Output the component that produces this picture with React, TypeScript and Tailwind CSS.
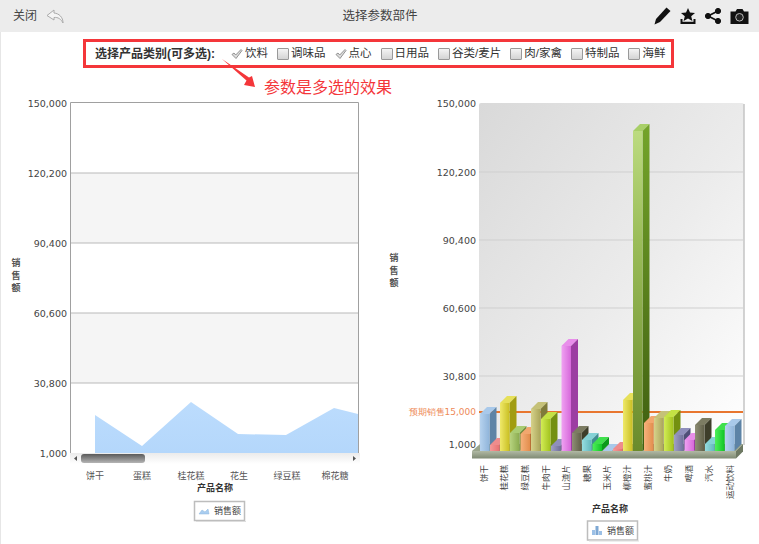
import React from 'react';

const categories = [
  { name: '饮料', checked: true },
  { name: '调味品', checked: false },
  { name: '点心', checked: true },
  { name: '日用品', checked: false },
  { name: '谷类/麦片', checked: false },
  { name: '肉/家禽', checked: false },
  { name: '特制品', checked: false },
  { name: '海鲜', checked: false },
];

const palette: Record<string, { id: string; from: string; to: string; side: string; top: string }> = {
  blue: { id: 'blue', from: '#b6d2ee', to: '#8fb4da', side: '#5d83a6', top: '#a9c9ea' },
  red: { id: 'red', from: '#f49a9a', to: '#e87070', side: '#b84f4f', top: '#ee8c8c' },
  yellow: { id: 'yellow', from: '#efe96a', to: '#c9bf22', side: '#a19c10', top: '#e6e05a' },
  green: { id: 'green', from: '#b7d37f', to: '#8aab4e', side: '#6c8a38', top: '#a9cc72' },
  orange: { id: 'orange', from: '#f6b27c', to: '#e28d4c', side: '#b96f37', top: '#f2a76e' },
  olive: { id: 'olive', from: '#d6d28a', to: '#aaa55a', side: '#7f7b3a', top: '#c5c178' },
  lime: { id: 'lime', from: '#d2ec55', to: '#a2c21e', side: '#749010', top: '#c4e244' },
  purple: { id: 'purple', from: '#a0a0c6', to: '#70709c', side: '#4f4f78', top: '#8f8fbc' },
  magenta: { id: 'magenta', from: '#f0a2f2', to: '#d668da', side: '#9c3ea2', top: '#e88eea' },
  dark: { id: 'dark', from: '#8f8f76', to: '#605f48', side: '#3e3e2a', top: '#7c7c62' },
  teal: { id: 'teal', from: '#96dde0', to: '#62b6bc', side: '#418d92', top: '#85d2d6' },
  lush: { id: 'lush', from: '#4ff05a', to: '#10c526', side: '#0a9a1a', top: '#3fe04c' },
};

const bars = [
  { x: 480, top: 414, c: 'blue' },
  { x: 490, top: 445, c: 'red' },
  { x: 500, top: 403, c: 'yellow' },
  { x: 510, top: 433, c: 'green' },
  { x: 520.5, top: 434, c: 'orange' },
  { x: 531, top: 409, c: 'olive' },
  { x: 541, top: 419, c: 'lime' },
  { x: 551, top: 446, c: 'purple' },
  { x: 561.5, top: 346, c: 'magenta' },
  { x: 572, top: 433, c: 'dark' },
  { x: 582, top: 440, c: 'teal' },
  { x: 592.5, top: 444, c: 'lush' },
  { x: 602.5, top: 451, c: 'blue' },
  { x: 613, top: 449, c: 'red' },
  { x: 623, top: 400, c: 'yellow' },
  { x: 633, top: 131, c: 'forest' },
  { x: 644, top: 423, c: 'orange' },
  { x: 654, top: 418, c: 'olive' },
  { x: 664, top: 417, c: 'lime' },
  { x: 674, top: 435, c: 'purple' },
  { x: 684.5, top: 440, c: 'magenta' },
  { x: 695, top: 425, c: 'dark' },
  { x: 705, top: 444, c: 'teal' },
  { x: 715, top: 430, c: 'lush' },
  { x: 725, top: 426, c: 'blue' },
];

const leftTicks = [
  { y: 103, label: '150,000' },
  { y: 173, label: '120,200' },
  { y: 243, label: '90,400' },
  { y: 313, label: '60,600' },
  { y: 383, label: '30,800' },
  { y: 453, label: '1,000' },
];

const rightTicks = [
  { y: 103, label: '150,000' },
  { y: 172, label: '120,200' },
  { y: 240, label: '90,400' },
  { y: 308, label: '60,600' },
  { y: 376, label: '30,800' },
  { y: 444, label: '1,000' },
];

const leftNames = [
  { x: 95, name: '饼干' },
  { x: 142, name: '蛋糕' },
  { x: 191, name: '桂花糕' },
  { x: 239, name: '花生' },
  { x: 287, name: '绿豆糕' },
  { x: 335, name: '棉花糖' },
];

const rightNames = [
  { x: 484, name: '饼干' },
  { x: 504, name: '桂花糕' },
  { x: 525, name: '绿豆糕' },
  { x: 546, name: '牛肉干' },
  { x: 566, name: '山渣片' },
  { x: 587, name: '糖果' },
  { x: 607, name: '玉米片' },
  { x: 627, name: '柳橙汁' },
  { x: 648, name: '蜜桃汁' },
  { x: 668, name: '牛奶' },
  { x: 689, name: '啤酒' },
  { x: 709, name: '汽水' },
  { x: 730, name: '运动饮料' },
];

const numberFont = "font-['DejaVu_Sans',sans-serif]";

function ToolbarIcons() {
  return (
    <div className="flex items-center gap-[9px]">
      <svg width="17" height="18" viewBox="0 0 17 18" className="fill-[#111]">
        <path d="M12.5 0.5 L16.5 4 L6 15 L0.5 17.5 L2 12 Z" />
      </svg>
      <svg width="16" height="16" viewBox="0 0 16 16" className="fill-[#111]">
        <path d="M8 0 L10 4.6 L15 5 L11.2 8.2 L12.4 13 L8 10.4 L3.6 13 L4.8 8.2 L1 5 L6 4.6 Z" />
        <path d="M0.5 11 H2.5 V13.8 H13.5 V11 H15.5 V16 H0.5 Z" />
      </svg>
      <svg width="16" height="16" viewBox="0 0 16 16" className="fill-[#111] stroke-[#111]">
        <circle cx="3" cy="8" r="2.6" />
        <circle cx="13" cy="3" r="2.6" />
        <circle cx="13" cy="13" r="2.6" />
        <path d="M3 8 L13 3 M3 8 L13 13" strokeWidth="1.8" />
      </svg>
      <svg width="19" height="15" viewBox="0 0 19 15">
        <path d="M0.5 2.5 H5.5 L7 0 H12.5 L14 2.5 H18.5 V15 H0.5 Z" className="fill-[#111]" />
        <circle cx="9.5" cy="8.3" r="3.8" className="fill-[#222] stroke-[#bbb]" strokeWidth="1" />
      </svg>
    </div>
  );
}

function LeftChart() {
  return (
    <svg width="380" height="449" viewBox="0 95 380 449" className="shrink-0">
      <defs>
        <linearGradient id="areaFill" x1="0" y1="0" x2="0" y2="1">
          <stop offset="0" stopColor="#bcdcfd" />
          <stop offset="1" stopColor="#b4d7fb" />
        </linearGradient>
        <linearGradient id="track" x1="0" y1="0" x2="0" y2="1">
          <stop offset="0" stopColor="#ebebeb" />
          <stop offset="1" stopColor="#ffffff" />
        </linearGradient>
        <linearGradient id="thumb" x1="0" y1="0" x2="0" y2="1">
          <stop offset="0" stopColor="#5a5a5a" />
          <stop offset="1" stopColor="#b5b5b5" />
        </linearGradient>
      </defs>
      <rect x="70" y="173" width="288" height="70" fill="#f5f5f5" />
      <rect x="70" y="313" width="288" height="70" fill="#f5f5f5" />
      {leftTicks.slice(1, 5).map((t) => (
        <line key={t.y} x1="70" x2="358" y1={t.y} y2={t.y} stroke="#b9b9b9" />
      ))}
      <polygon
        points="95,453 95,415 142,446 191,402 238,434 286,435 334,408 358,414 358,453"
        fill="url(#areaFill)"
      />
      <path d="M70.5 453 V102.5 H358.5 V453" fill="none" stroke="#a0a0a0" />
      {leftTicks.map((t) => (
        <text key={t.y} x="67" y={t.y + 4} textAnchor="end" fontSize="9.5" fill="#444" className={numberFont}>
          {t.label}
        </text>
      ))}
      <rect x="70" y="453" width="290" height="11" fill="url(#track)" />
      <rect x="81" y="454" width="64" height="9" rx="3" fill="url(#thumb)" />
      <polygon points="77,456 77,461 74,458.5" fill="#555" />
      <polygon points="353,456 353,461 356,458.5" fill="#555" />
      {leftNames.map((n) => (
        <text key={n.x} x={n.x} y="479" textAnchor="middle" fontSize="9" fill="#555">
          {n.name}
        </text>
      ))}
      <text x="215" y="491" textAnchor="middle" fontSize="9" fontWeight="700" fill="#333">
        产品名称
      </text>
      {['销', '售', '额'].map((c, i) => (
        <text key={c} x="16" y={266 + i * 12.5} textAnchor="middle" fontSize="9" fontWeight="700" fill="#555">
          {c}
        </text>
      ))}
      <rect x="194.5" y="501.5" width="50" height="19" fill="#fff" stroke="#bdbdbd" strokeWidth="1.5" />
      <line x1="196" x2="246" y1="521.5" y2="521.5" stroke="#ddd" />
      <polygon points="199,514 202,510 205,512 208,509 209,514" fill="#a9cdf0" stroke="#8db6dc" strokeWidth="0.5" />
      <text x="214" y="514" fontSize="9" fill="#444">
        销售额
      </text>
    </svg>
  );
}

function RightChart() {
  return (
    <svg width="379" height="449" viewBox="380 95 379 449" className="shrink-0">
      <defs>
        <linearGradient id="wall" x1="0" y1="0" x2="1" y2="1">
          <stop offset="0" stopColor="#d9d9d9" />
          <stop offset="0.55" stopColor="#ececec" />
          <stop offset="1" stopColor="#ffffff" />
        </linearGradient>
        <linearGradient id="floor" x1="0" y1="0" x2="0" y2="1">
          <stop offset="0" stopColor="#b0b9a4" />
          <stop offset="1" stopColor="#7f8a74" />
        </linearGradient>
        <linearGradient id="bar-forest" x1="0" y1="0" x2="0" y2="1">
          <stop offset="0" stopColor="#bcdb80" />
          <stop offset="0.35" stopColor="#9abc58" />
          <stop offset="1" stopColor="#6a8b2c" />
        </linearGradient>
        <linearGradient id="side-forest" x1="0" y1="0" x2="0" y2="1">
          <stop offset="0" stopColor="#74a42a" />
          <stop offset="1" stopColor="#3f5e10" />
        </linearGradient>
        {Object.values(palette).map((p) => (
          <linearGradient key={p.id} id={`bar-${p.id}`} x1="0" y1="0" x2="1" y2="0">
            <stop offset="0" stopColor={p.from} />
            <stop offset="1" stopColor={p.to} />
          </linearGradient>
        ))}
      </defs>
      <rect x="479" y="103" width="265" height="342" rx="2" fill="url(#wall)" />
      <path d="M744 104 V445" stroke="#c4c4c4" strokeWidth="1.5" />
      {rightTicks.slice(1, 5).map((t) => (
        <line key={t.y} x1="479" x2="743" y1={t.y} y2={t.y} stroke="#cfcfcf" />
      ))}
      <line x1="479" x2="743" y1="412" y2="412" stroke="#e8762f" strokeWidth="2" />
      <polygon points="480,444 743,444 736,451 472,451" fill="#9aa58c" />
      <rect x="472" y="451" width="264" height="7.5" fill="url(#floor)" />
      <polygon points="736,451 743,444 743,451.5 736,458.5" fill="#6e7963" />
      {bars.map((b, i) => {
        const forest = b.c === 'forest';
        const p = palette[b.c];
        const w = 9.5;
        const d = 7;
        return (
          <g key={i}>
            <polygon
              points={`${b.x},${b.top} ${b.x + d},${b.top - d} ${b.x + w + d},${b.top - d} ${b.x + w},${b.top}`}
              fill={forest ? '#a8cf68' : p.top}
            />
            <polygon
              points={`${b.x + w},${b.top} ${b.x + w + d},${b.top - d} ${b.x + w + d},${451 - d} ${b.x + w},451`}
              fill={forest ? 'url(#side-forest)' : p.side}
            />
            <rect x={b.x} y={b.top} width={w} height={451 - b.top} fill={`url(#bar-${forest ? 'forest' : p.id})`} />
          </g>
        );
      })}
      {rightTicks.map((t) => (
        <text key={t.y} x="476" y={t.y + 4} textAnchor="end" fontSize="9.5" fill="#444" className={numberFont}>
          {t.label}
        </text>
      ))}
      <text x="476" y="415" textAnchor="end" fontSize="9" fill="#ee8a58" className={numberFont}>
        预期销售15,000
      </text>
      {rightNames.map((n) => (
        <text
          key={n.x}
          transform={`translate(${n.x + 3} 465) rotate(-90)`}
          textAnchor="end"
          fontSize="8.5"
          fill="#444"
        >
          {n.name}
        </text>
      ))}
      <text x="610" y="512" textAnchor="middle" fontSize="9" fontWeight="700" fill="#333">
        产品名称
      </text>
      {['销', '售', '额'].map((c, i) => (
        <text key={c} x="394" y={261 + i * 12.5} textAnchor="middle" fontSize="9" fontWeight="700" fill="#555">
          {c}
        </text>
      ))}
      <rect x="587.5" y="521" width="50" height="19" fill="#fff" stroke="#bdbdbd" strokeWidth="1.5" />
      <line x1="589" x2="639" y1="541" y2="541" stroke="#ddd" />
      <rect x="592" y="530" width="3" height="5" fill="#9cc0e6" />
      <rect x="595.5" y="526" width="3" height="9" fill="#7ea8d4" />
      <rect x="599" y="531" width="3" height="4" fill="#9cc0e6" />
      <text x="607" y="534" fontSize="9" fill="#444">
        销售额
      </text>
    </svg>
  );
}

export default function App() {
  return (
    <div className="relative h-[544px] w-full overflow-hidden bg-white font-['Liberation_Sans','Noto_Sans_CJK_SC',sans-serif] text-[#333] shadow-[inset_1px_0_0_#e6e6e6]">
      <div className="flex h-[32px] items-center justify-between bg-[#ececec] pl-[13px] pr-[10px]">
        <div className="flex items-center gap-[9px]">
          <span className="text-[12px] text-[#444]">关闭</span>
          <svg width="18" height="15" viewBox="0 0 18 15" className="fill-[#f4f4f4] stroke-[#aaa]">
            <path d="M8 1 L1 6.5 L8 11 V8.5 C12 8 15 10 17 14 C17 8 13 4.5 8 4 Z" />
          </svg>
        </div>
        <span className="ml-[42px] text-[12.5px] text-[#444]">选择参数部件</span>
        <ToolbarIcons />
      </div>

      <div className="ml-[83px] mt-[7px] flex h-[29px] w-[591px] items-center border-[3px] border-[#f4363a] pl-[9px] text-[11.5px] text-[#333]">
        <span className="mr-[16px] whitespace-nowrap text-[12px] font-bold">选择产品类别(可多选):</span>
        <div className="flex items-center gap-[9px]">
          {categories.map((c) => (
            <label key={c.name} className="flex items-center gap-[2px] whitespace-nowrap">
              {c.checked ? (
                <svg width="12" height="12" viewBox="0 0 12 12" className="fill-[#ddd] stroke-[#888]">
                  <path d="M1 6.5 L3 5 L4.7 7 L10 1.5 L11 2.5 L5 10.5 Z" strokeWidth="0.9" />
                </svg>
              ) : (
                <span className="h-[12px] w-[12px] rounded-[1px] border border-[#999] bg-gradient-to-b from-[#f4f4f4] to-[#d4d4d4]" />
              )}
              {c.name}
            </label>
          ))}
        </div>
      </div>

      <svg width="36" height="32" viewBox="0 0 36 32" className="absolute left-[220px] top-[58px]">
        <path d="M2 1 L29 19.5 L32 18 L35 29 L24 27 L26.5 22.5 Z" className="fill-[#f4363a]" />
      </svg>
      <span className="absolute left-[264px] top-[76px] text-[16px] text-[#f4363a]">参数是多选的效果</span>

      <div className="mt-[27px] flex">
        <LeftChart />
        <RightChart />
      </div>
    </div>
  );
}
